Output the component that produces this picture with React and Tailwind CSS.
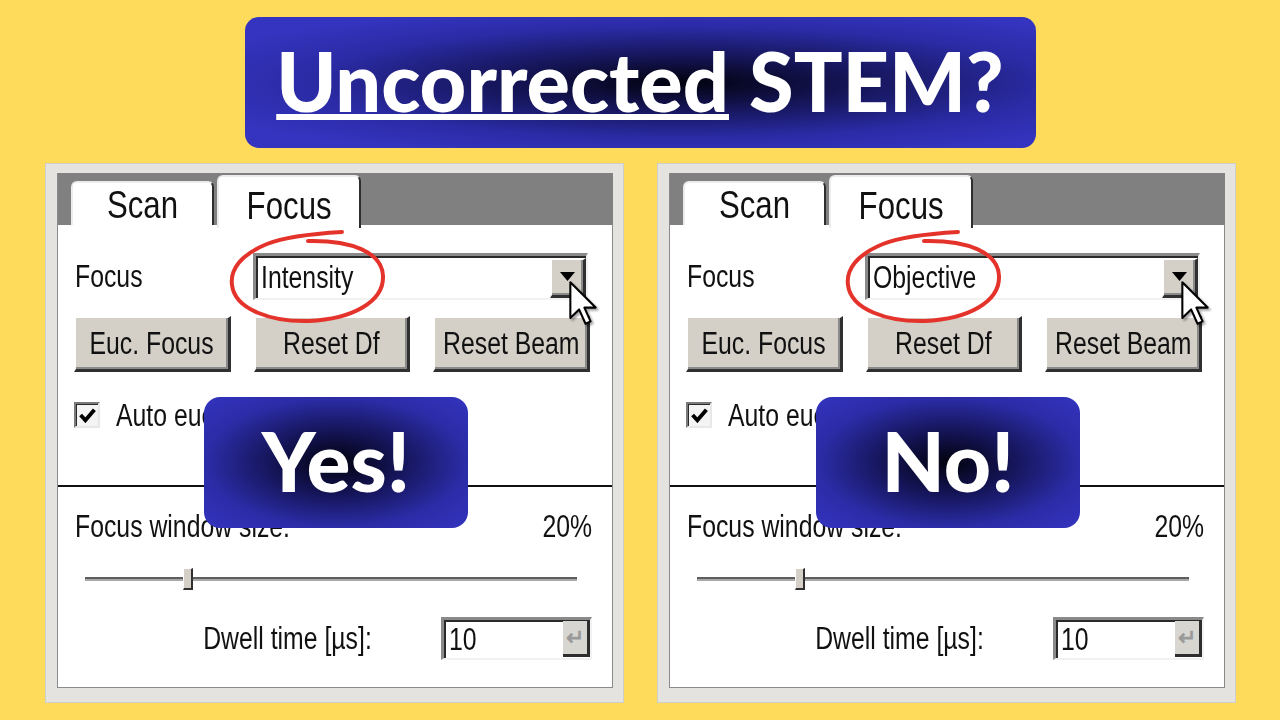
import React from "react";

const ui = "font-['Liberation_Sans',Arial,sans-serif]";
const heavy = "font-['Lato','Inter',sans-serif] font-black";

const raised =
  "bg-[#d4d0c8] border-t-2 border-l-2 border-t-white border-l-white border-b-[3px] border-r-[3px] border-b-[#303030] border-r-[#303030] shadow-[inset_-2px_-2px_0_#8a8a8a]";
const sunken =
  "bg-white border-t-[3px] border-l-[3px] border-t-[#8a8a8a] border-l-[#8a8a8a] border-b-2 border-r-2 border-b-[#f2f2f2] border-r-[#f2f2f2] shadow-[inset_2px_2px_0_#2a2a2a]";

// old Windows UI font is narrow; squeeze Arial widths to match
const T = ({ children, o = "origin-left" }) => (
  <span className={`inline-block whitespace-nowrap scale-x-[0.8] ${o}`}>{children}</span>
);

const Cursor = () => (
  <svg width="30" height="46" viewBox="0 0 13 20" className="absolute left-[522px] top-[116px] drop-shadow-[2px_2px_1px_rgba(0,0,0,0.35)]">
    <path d="M1 1 V16.5 L4.8 12.8 L7.6 19 L9.8 18 L7.1 12 H12 Z" fill="white" stroke="black" strokeWidth="0.9" strokeLinejoin="round" />
  </svg>
);

const Circle = ({ dx = 0 }) => (
  <svg width="579" height="540" viewBox="0 0 579 540" className="absolute left-0 top-0 pointer-events-none">
    <g transform={`translate(${dx} 0)`}>
      <path
        d="M296 68 C262 70 236 74 221 80 C194 91 184 106 186 121 C189 146 226 158 263 157 C306 155 338 138 337 112 C336 88 305 76 262 77"
        fill="none"
        stroke="#e4332b"
        strokeWidth="4"
        strokeLinecap="round"
      />
    </g>
  </svg>
);

function Panel({ value, badge, dx }) {
  return (
    <div className={`relative w-[579px] h-[540px] bg-[#e4e3df] border border-[#cfcec9] pt-[9px] pl-[11px] pr-[10px] pb-[14px] text-[#111] ${ui}`}>
      <div className="flex h-full flex-col">
        <div className="flex h-[52px] items-end bg-[#808080] pl-[13px] border-l border-[#8a8a8a]">
          <div className="flex h-[44px] w-[143px] items-center justify-center rounded-t-[6px] border-t-2 border-l-2 border-r-2 border-t-[#ececec] border-l-[#ececec] border-r-[#2e2e2e] bg-white text-[39px] leading-none">
            <T o="origin-center">Scan</T>
          </div>
          <div className="relative z-10 -mb-[3px] ml-[3px] flex h-[53px] w-[144px] items-start justify-center rounded-t-[6px] border-t-2 border-l-2 border-r-2 border-t-[#ececec] border-l-[#ececec] border-r-[#2e2e2e] bg-white pt-[9px] text-[39px] leading-none">
            <T o="origin-center">Focus</T>
          </div>
        </div>
        <div className="flex flex-1 flex-col border-l border-r border-b border-[#8a8a8a] bg-white px-[16px] pt-[28px] text-[31px] leading-none">
          <div className="flex h-[47px] items-center">
            <div className="w-[179px] pl-[1px]"><T>Focus</T></div>
            <div className={`flex h-[47px] w-[335px] items-center justify-between ${sunken}`}>
              <span className="pl-[5px]"><T>{value}</T></span>
              <div className={`mt-[1px] flex h-[40px] w-[36px] items-center justify-center ${raised}`}>
                <svg width="15" height="10" viewBox="0 0 15 10">
                  <path d="M0 0 H15 L7.5 9 Z" fill="black" />
                </svg>
              </div>
            </div>
          </div>
          <div className="mt-[16px] flex h-[56px] gap-[23px]">
            <div className={`flex w-[157px] items-center justify-center ${raised}`}><T o="origin-center">Euc. Focus</T></div>
            <div className={`flex w-[156px] items-center justify-center ${raised}`}><T o="origin-center">Reset Df</T></div>
            <div className={`flex w-[157px] items-center justify-center ${raised}`}><T o="origin-center">Reset Beam</T></div>
          </div>
          <div className="mt-[30px] flex h-[26px] items-center">
            <div className="flex h-[26px] w-[26px] items-center justify-center border-t-2 border-l-2 border-t-[#7a7a7a] border-l-[#7a7a7a] border-b-2 border-r-2 border-b-[#e8e8e8] border-r-[#e8e8e8] bg-[#f4f4f4] shadow-[inset_1px_1px_0_#2a2a2a]">
              <svg width="17" height="15" viewBox="0 0 16 14">
                <path d="M1.5 6.5 L6 11.5 L14.5 1.5" fill="none" stroke="black" strokeWidth="3.6" />
              </svg>
            </div>
            <span className="ml-[16px]"><T>Auto eucentric</T></span>
          </div>
          <div className="-mx-[16px] mt-[57px] h-[2px] bg-[#111]" />
          <div className="mt-[24px] flex h-[30px] items-center justify-between pl-[1px] pr-[4px]">
            <T>Focus window size:</T>
            <T o="origin-right">20%</T>
          </div>
          <div className="relative ml-[11px] mt-[26px] h-[24px] w-[492px]">
            <div className="absolute left-0 right-0 top-[10px] h-[4px] border-t-2 border-[#5e5e5e] bg-[#a8a8a8]" />
            <div className="absolute left-[98px] top-[1px] h-[22px] w-[10px] border-t border-l border-white border-b-2 border-r-2 border-b-[#303030] border-r-[#303030] bg-[#d4d0c8]" />
          </div>
          <div className="mt-[26px] flex h-[43px] items-center justify-end pr-[4px]">
            <span className="mr-[69px]"><T o="origin-right">Dwell time [µs]:</T></span>
            <div className={`flex h-[43px] w-[151px] items-center justify-between ${sunken}`}>
              <span className="pl-[5px]"><T>10</T></span>
              <div className="flex h-[36px] w-[27px] items-center justify-center bg-[#d8d6d0] border-b-[3px] border-r-[3px] border-[#2e2e2e] text-[22px] text-[#9a9a9a] font-bold">
                ↵
              </div>
            </div>
          </div>
        </div>
      </div>

      <Circle dx={dx} />
      <Cursor />

      <div className={`absolute left-[158px] top-[233px] flex h-[131px] w-[264px] items-center justify-center rounded-[16px] bg-[radial-gradient(ellipse_at_center,#02020e_0%,#15155a_35%,#2c2ca8_70%,#3333bf_100%)] text-[82px] leading-none text-white ${heavy}`}>
        <span className="-mt-[6px]">{badge}</span>
      </div>
    </div>
  );
}

export default function App() {
  return (
    <div className="h-[720px] w-[1280px] overflow-hidden bg-[#ffdb5c]">
      <div className="pt-[17px]">
        <div className={`mx-auto flex h-[131px] w-[791px] items-center justify-center gap-[20px] rounded-[14px] bg-[radial-gradient(ellipse_at_55%_50%,#02020e_0%,#16165c_30%,#2b2ba6_60%,#3434c0_85%)] text-[81px] leading-none text-white ${heavy}`}>
          <span className="-mt-[4px] underline decoration-[6px] underline-offset-[2px]">Uncorrected</span>
          <span className="-mt-[4px]">STEM?</span>
        </div>
      </div>
      <div className="mt-[15px] flex gap-[33px] pl-[45px]">
        <Panel value="Intensity" badge="Yes!" dx={0} />
        <Panel value="Objective" badge="No!" dx={4} />
      </div>
    </div>
  );
}
